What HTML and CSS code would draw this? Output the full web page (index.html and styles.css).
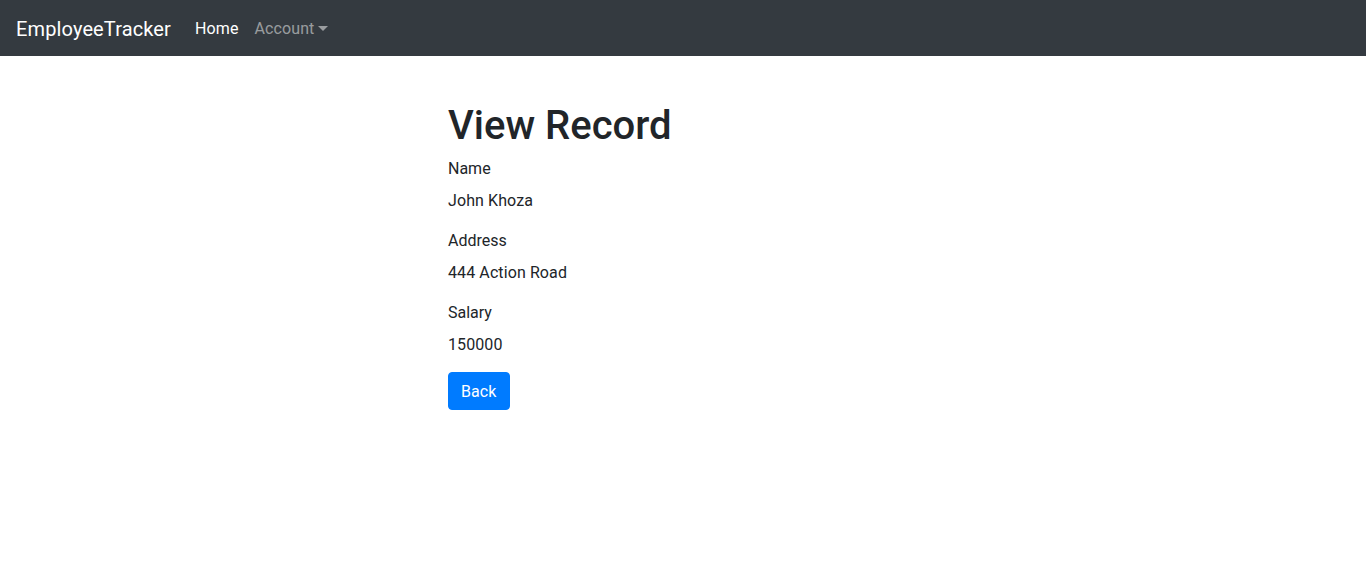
FILE: index.html
```html
<!DOCTYPE html>
<html lang="en">
<head>
<meta charset="utf-8">
<title>View Record</title>
<link rel="stylesheet" href="styles.css">
</head>
<body>
<nav class="navbar">
  <a class="brand" href="#">EmployeeTracker</a>
  <ul class="nav">
    <li><a class="nav-link active" href="#">Home</a></li>
    <li><a class="nav-link dropdown" href="#">Account</a></li>
  </ul>
</nav>
<main class="main">
  <h1 class="title">View Record</h1>
  <div class="field">
    <label class="label">Name</label>
    <div class="value">John Khoza</div>
  </div>
  <div class="field">
    <label class="label">Address</label>
    <div class="value">444 Action Road</div>
  </div>
  <div class="field field-last">
    <label class="label">Salary</label>
    <div class="value">150000</div>
  </div>
  <a class="btn" href="#">Back</a>
</main>
</body>
</html>
```
FILE: styles.css
```css
* { box-sizing: border-box; }
html, body { margin: 0; padding: 0; }
body {
  font-family: Roboto, "Helvetica Neue", Arial, sans-serif;
  font-size: 16px;
  line-height: 1.5;
  color: #212529;
  background: #fff;
}
a { text-decoration: none; }
.navbar {
  height: 56px;
  background: #343a40;
  display: flex;
  align-items: center;
  padding: 9px 16px 7px;
}
.brand {
  font-size: 20px;
  line-height: 30px;
  color: #fff;
  margin-right: 16px;
  padding: 5px 0;
  letter-spacing: 0.13px;
}
.nav {
  list-style: none;
  margin: 0;
  padding: 0;
  display: flex;
}
.nav-link {
  display: block;
  padding: 8px 8px;
  color: rgba(255,255,255,.5);
  letter-spacing: 0.1px;
}
.nav-link.active { color: #fff; }
.dropdown::after {
  content: "";
  display: inline-block;
  margin-left: 4px;
  vertical-align: 3px;
  border-top: 5px solid;
  border-right: 5px solid transparent;
  border-left: 5px solid transparent;
}
.main {
  width: 470px;
  margin: 0 auto;
  padding-top: 46px;
}
.title {
  font-size: 40px;
  font-weight: 500;
  line-height: 1.2;
  margin: 0 0 7px;
}
.field { margin-bottom: 16px; }
.field-last { margin-bottom: 15px; }
.label {
  display: inline-block;
  margin-bottom: 8px;
}
.value { letter-spacing: 0.1px; }
.btn {
  display: inline-block;
  background: #007bff;
  color: #fff;
  border: 1px solid #007bff;
  border-radius: 4px;
  padding: 7px 12px 5px;
  font-size: 16px;
  line-height: 1.5;
  letter-spacing: 0.1px;
}
```
